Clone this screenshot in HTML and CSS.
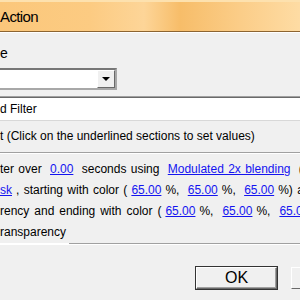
FILE: index.html
```html
<!DOCTYPE html>
<html lang="en">
<head>
    <meta charset="UTF-8">
    <title>Action</title>
    <link rel="stylesheet" href="styles.css">
</head>
<body>
    <div class="window">
        <div class="title-bar">
            <span class="title">Action</span>
        </div>
        <div class="content">
            <div class="label">e</div>
            <div class="combo">
                <div class="combo-btn"><span class="arrow"></span></div>
            </div>
            <div class="listbox">d Filter</div>
            <div class="hint">t (Click on the underlined sections to set values)</div>
            <div class="rich">
                <div class="line">ter over <a class="val">0.00</a> seconds using <a class="val">Modulated 2x blending</a> (</div>
                <div class="line"><a class="val first">sk</a>, starting with color (<a class="val">65.00</a>%, <a class="val">65.00</a>%, <a class="val">65.00</a>%) and</div>
                <div class="line wide">rency and ending with color (<a class="val">65.00</a>%, <a class="val">65.00</a>%, <a class="val">65.00</a>%)</div>
                <div class="line">ransparency</div>
            </div>
            <div class="bottom-sep"></div>
            <div class="buttons">
                <button class="btn default">OK</button>
                <button class="btn">Cancel</button>
            </div>
        </div>
    </div>
</body>
</html>
```

FILE: styles.css
```css
html, body {
    margin: 0;
    padding: 0;
    overflow: hidden;
}
body {
    width: 300px;
    height: 300px;
    background: #f0f0f0;
    font-family: "Liberation Sans", Arial, sans-serif;
    font-size: 12px;
    color: #000;
}
.window {
    width: 300px;
    height: 300px;
    overflow: hidden;
}
.title-bar {
    height: 31px;
    background: linear-gradient(90deg, #fbc77b 0%, #fccb82 30%, #fdd598 48%, #f7bd69 60%, #fbcd88 80%, #fedca4 100%);
    border-bottom: 1px solid #8c6431;
    box-shadow: 0 1px 0 #fff, inset 0 2px 0 #fde1ae;
    display: flex;
    align-items: center;
}
.title {
    font-size: 15px;
    letter-spacing: -0.6px;
    padding-top: 1px;
}
.content {
    padding-top: 14px;
}
.label {
    height: 15px;
    line-height: 15px;
    font-size: 14px;
}
.combo {
    margin-top: 7px;
    margin-left: -2px;
    width: 115px;
    height: 18px;
    border: 2px solid;
    border-color: #777 #a8a8a8 #a8a8a8 #777;
    background: #fff;
    display: flex;
    justify-content: flex-end;
}
.combo-btn {
    width: 16px;
    height: 16px;
    background: #f0f0f0;
    border: 1px solid;
    border-color: #fff #696969 #696969 #fff;
    display: flex;
    align-items: center;
    justify-content: center;
}
.arrow {
    width: 0;
    height: 0;
    border-left: 4px solid transparent;
    border-right: 4px solid transparent;
    border-top: 4px solid #000;
}
.listbox {
    margin-top: 6px;
    height: 22px;
    line-height: 22px;
    background: #fff;
    border-top: 1px solid #a0a0a0;
    box-shadow: inset 0 1px 0 #696969;
    border-bottom: 1px solid #d8d8d8;
    padding-top: 1px;
}
.hint {
    height: 31px;
    line-height: 30px;
    border-bottom: 1px solid #a0a0a0;
    box-shadow: 0 1px 0 #fff;
}
.rich {
    padding-top: 6px;
    word-spacing: 1px;
}
.line {
    height: 21px;
    line-height: 21px;
    white-space: nowrap;
}
.line.wide {
    word-spacing: 1.6px;
}
.val {
    color: #1414f0;
    text-decoration: underline;
    margin: 0 4px;
}
.val.first {
    margin-left: 0;
}
.bottom-sep {
    height: 1px;
    background: linear-gradient(90deg, #fff 0, #fff 69px, #a0a0a0 69px);
    box-shadow: 0 1px 0 #fff;
}
.buttons {
    display: flex;
    gap: 14px;
    padding-left: 196px;
    padding-top: 23px;
}
.btn {
    flex: none;
    width: 81px;
    height: 22px;
    background: #f0f0f0;
    border: 1px solid;
    border-color: #fff #696969 #696969 #fff;
    font-family: "Liberation Sans", Arial, sans-serif;
    font-size: 16px;
    padding: 0;
    color: #000;
}
.btn.default {
    outline: 1px solid #333;
    box-shadow: inset -1px -1px 0 #a0a0a0;
}
```
